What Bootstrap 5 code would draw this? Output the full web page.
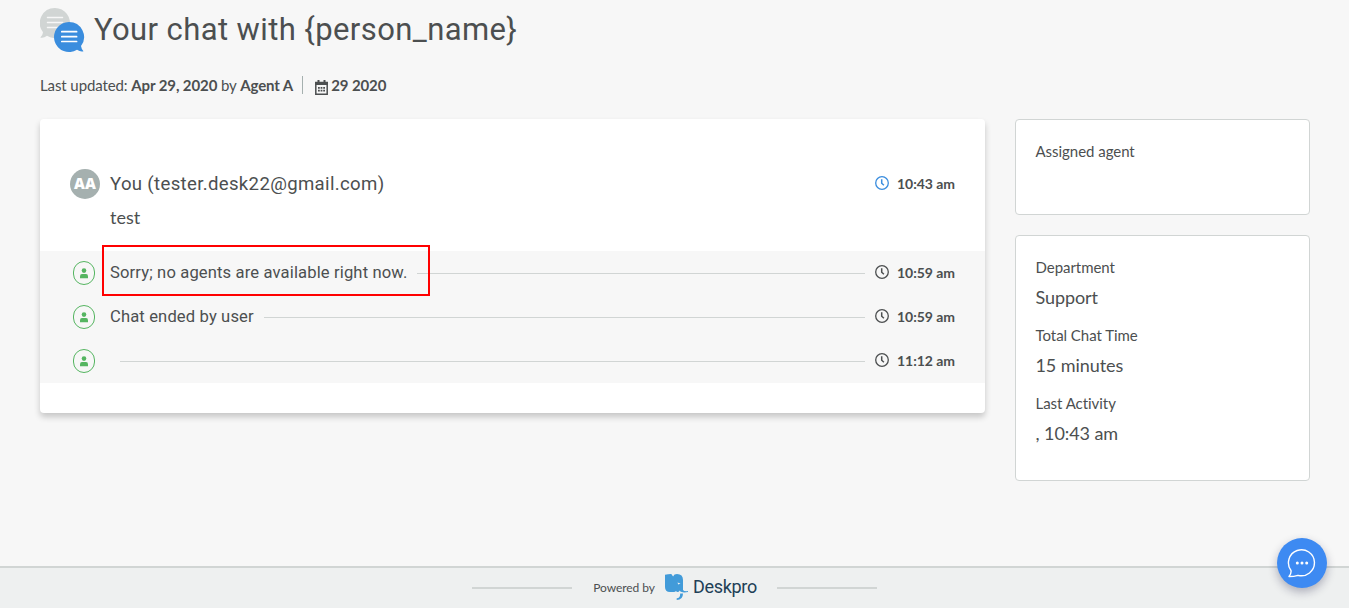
<!DOCTYPE html>
<html lang="en">
<head>
<meta charset="utf-8">
<meta name="viewport" content="width=device-width, initial-scale=1">
<title>Your chat</title>
<link href="https://cdn.jsdelivr.net/npm/bootstrap@5.3.0/dist/css/bootstrap.min.css" rel="stylesheet">
<style>
body{background:#f7f7f7;color:#4c4f50;font-family:Lato,sans-serif;font-size:15px;line-height:20px;height:608px;overflow:hidden}
svg{display:block;flex:none}
.heading-font{font-family:Roboto,sans-serif}
.page-wrap{width:1270px;margin-left:40px;height:566px}
.page-title{height:60px;gap:10px}
.page-title h1{font-size:31px;font-weight:400;line-height:36px;letter-spacing:.4px;margin:0 0 0 -1px}
.title-icon{margin-top:-1px}
.meta-row{height:20px;margin-top:15px;letter-spacing:-.1px}
.meta-row b{font-weight:700}
.meta-sep{width:1px;height:18px;background:#a5b0af;margin:0 12px 0 9px}
.columns{margin-top:24px;gap:30px}
.chat-box{width:945px;height:294px;padding:50px 0 30px;background:#fff;border-radius:4px;box-shadow:0 4px 6px rgba(0,0,0,.2)}
.side-col{width:295px;gap:20px}
.first-msg{height:82px;padding:0 30px}
.avatar{width:30px;height:30px;background:#a5b0af;color:#fff;font:800 15px/29px "Open Sans",sans-serif}
.sender{font-size:18.6px;line-height:30px;letter-spacing:.33px}
.msg-body{margin-left:10px}
.big-text{font-size:18px;margin-top:8px}
.event-list{background:#f7f7f7}
.event-row{height:44px;padding:0 30px 0 33px}
.event-text{font-size:16.6px;margin-left:15px;letter-spacing:.13px;line-height:22px;margin-top:-1px}
.rule-line{height:1px;background:#d1d5d4;margin:1px 10px 0}
.time-tag{width:80px;font-size:14px;font-weight:700;gap:8px;letter-spacing:-.05px}
.time-tag svg{margin-top:-2px}
.person-ring{width:22px;height:24px;border:1px solid #55b561;border-radius:11px}
.marker-box{left:62px;top:-6px;width:328px;height:51px;border:2px solid #f00}
.info-box{background:#fff;border:1px solid #d1d5d4;border-radius:4px;padding:21px 20px 0 19.5px}
.info-box dt{font-weight:400;line-height:20px;margin:0 0 10px;letter-spacing:-.04px}
.info-box dd{font-size:18px;line-height:20px;margin:0 0 18px;letter-spacing:-.08px}
.foot-bar{height:42px;background:#eef0f0;border-top:2px solid #d1d5d4;font-size:12px;padding:0 0 1px}
.foot-line{width:100px;height:2px;background:#d1d5d4;margin-top:1px}
.brand-word{font:400 18px/24px Roboto,sans-serif;color:#213f57;letter-spacing:-.3px;margin:-2px 20px 0 4px}
.chat-fab{left:1277px;top:538px;width:50px;height:50px;background:#3d8af2;box-shadow:0 4px 10px rgba(20,20,60,.3)}
</style>
</head>
<body>
<svg width="0" height="0" class="position-absolute">
<symbol id="clock" viewBox="0 0 14 14"><circle cx="7" cy="7" r="6.3" fill="none" stroke="currentColor" stroke-width="1.3"/><path d="M6.700 3.200v4l2.200 2" fill="none" stroke="currentColor" stroke-width="1.500"/></symbol>
<symbol id="person" viewBox="0 0 8 11"><circle cx="4" cy="2.600" r="2.300" fill="currentColor"/><path d="M0 10.300V8.200Q0 6.100 2 6.100h4q2 0 2 2.100v2.100z" fill="currentColor"/></symbol>
</svg>
<main class="page-wrap">
  <header class="page-title d-flex align-items-center">
    <svg class="title-icon" width="45" height="46" viewBox="0 0 45 46">
      <path d="M15 1a15 15 0 1 1-8 27.700Q3.500 31.300 .3 30.400 2.800 28.300 3 25.200A15 15 0 0 1 15 1z" fill="#d1d5d4"/>
      <path d="M7.500 10.500h15M7.500 15.500h15M7.500 20.500h15" stroke="#f7f7f7" stroke-width="1.500" stroke-linecap="round"/>
      <path d="M29 15a15 15 0 1 0 8 27.700q3.500 2.300 6.500 1.500Q41.500 42.500 41 39A15 15 0 0 0 29 15z" fill="#3a8dde"/>
      <path d="M21.800 24.700h14.800M21.800 29.700h14.800M21.800 34.500h14.800" stroke="#fff" stroke-width="1.700" stroke-linecap="round"/>
    </svg>
    <h1 class="heading-font text-nowrap">Your chat with {person_name}</h1>
  </header>
  <div class="meta-row d-flex align-items-center text-nowrap">
    <span>Last updated: <b>Apr 29, 2020</b> by <b>Agent A</b></span>
    <span class="meta-sep"></span>
    <svg width="13" height="15" viewBox="0 0 13 15" style="margin:4px 3px 0 0"><path d="M.8 2.500h11.400v11.700H.8z" fill="none" stroke="currentColor" stroke-width="1.500"/><path d="M0 2h13v3H0zM2.500 0h2v3h-2zM8.500 0h2v3h-2z" fill="currentColor"/><path d="M3 7h1.800v1.800H3zM5.600 7h1.800v1.800H5.600zM8.200 7H10v1.800H8.200zM3 9.800h1.800v1.800H3zM5.600 9.800h1.800v1.800H5.600zM8.200 9.800H10v1.800H8.200z" fill="currentColor"/></svg>
    <b>29 2020</b>
  </div>
  <div class="columns d-flex align-items-start">
    <section class="chat-box">
      <div class="first-msg d-flex align-items-start">
        <span class="avatar rounded-circle text-center">AA</span>
        <div class="msg-body flex-grow-1">
          <div class="sender heading-font">You (tester.desk22@gmail.com)</div>
          <div class="big-text">test</div>
        </div>
        <div class="time-tag d-flex align-items-center text-nowrap" style="height:30px"><svg width="14" height="14" color="#3a8dde"><use href="#clock"/></svg>10:43 am</div>
      </div>
      <div class="event-list position-relative">
        <div class="marker-box position-absolute"></div>
        <div class="event-row d-flex align-items-center">
          <span class="person-ring d-flex align-items-center justify-content-center"><svg width="8" height="11" color="#55b561"><use href="#person"/></svg></span>
          <span class="event-text heading-font text-nowrap">Sorry; no agents are available right now.</span>
          <span class="rule-line flex-grow-1"></span>
          <span class="time-tag d-flex align-items-center text-nowrap"><svg width="14" height="14"><use href="#clock"/></svg>10:59 am</span>
        </div>
        <div class="event-row d-flex align-items-center">
          <span class="person-ring d-flex align-items-center justify-content-center"><svg width="8" height="11" color="#55b561"><use href="#person"/></svg></span>
          <span class="event-text heading-font text-nowrap">Chat ended by user</span>
          <span class="rule-line flex-grow-1"></span>
          <span class="time-tag d-flex align-items-center text-nowrap"><svg width="14" height="14"><use href="#clock"/></svg>10:59 am</span>
        </div>
        <div class="event-row d-flex align-items-center">
          <span class="person-ring d-flex align-items-center justify-content-center"><svg width="8" height="11" color="#55b561"><use href="#person"/></svg></span>
          <span class="event-text"></span>
          <span class="rule-line flex-grow-1"></span>
          <span class="time-tag d-flex align-items-center text-nowrap"><svg width="14" height="14"><use href="#clock"/></svg>11:12 am</span>
        </div>
      </div>
    </section>
    <aside class="side-col d-flex flex-column">
      <dl class="info-box m-0" style="height:96px"><dt>Assigned agent</dt></dl>
      <dl class="info-box m-0" style="height:246px">
        <dt>Department</dt><dd>Support</dd>
        <dt>Total Chat Time</dt><dd>15 minutes</dd>
        <dt>Last Activity</dt><dd>, 10:43 am</dd>
      </dl>
    </aside>
  </div>
</main>
<footer class="foot-bar d-flex align-items-center justify-content-center">
  <span class="foot-line"></span>
  <span class="text-nowrap" style="margin:1px 10px 0 21px;letter-spacing:-.05px">Powered by</span>
  <svg width="24" height="27" viewBox="0 0 24 27"><path d="M0 .8Q3 0 6 0q1.600.3 2 1.800Q9 0 12 0q6 0 6 6v10q1 1.600 5 1.100v1q-4.500.6-6.300-.1-1.700-.5-2-1.500-.7 1.500-2.200 1.500-1 0-1.500-1-.8 1-2 1H5q-5 0-5-5z" fill="#429bd9"/><path d="M12.500 8.500l3 1-2.300 1z" fill="#eef0f0"/><path d="M6.500 0l1.600 2.500L9.500 0z" fill="#eef0f0"/><path d="M18 19.500q0 6.500-6.300 6.500v-1.800q3.500 0 3.500-4.700z" fill="#429bd9"/></svg>
  <span class="brand-word">Deskpro</span>
  <span class="foot-line"></span>
</footer>
<button class="chat-fab position-absolute border-0 rounded-circle p-0 d-flex align-items-center justify-content-center" aria-label="Chat">
  <svg width="30" height="30" viewBox="0 0 30 30"><path d="M4 22.500A13 13 0 1 1 11 27.300Q7 28.500 2 28.500 4.500 25.700 4 22.500z" fill="none" stroke="#fff" stroke-width="1.400" stroke-linejoin="round"/><g fill="#fff"><circle cx="10.300" cy="15" r="1.500"/><circle cx="15" cy="15" r="1.500"/><circle cx="19.700" cy="15" r="1.500"/></g></svg>
</button>
<script src="https://cdn.jsdelivr.net/npm/bootstrap@5.3.0/dist/js/bootstrap.bundle.min.js"></script>
</body>
</html>
